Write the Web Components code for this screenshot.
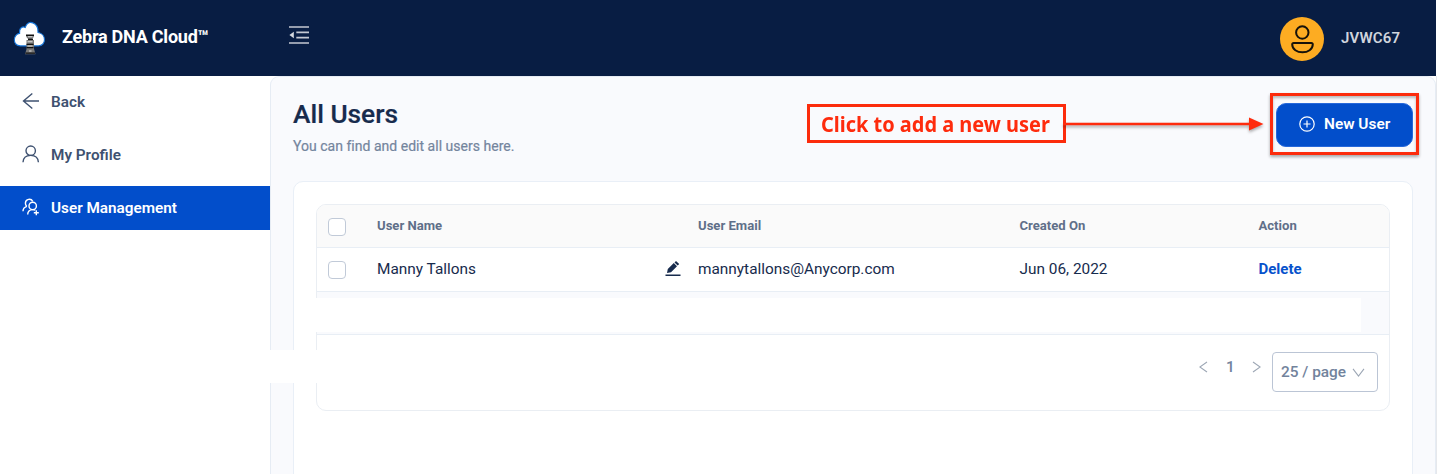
<!DOCTYPE html>
<html lang="en">
<head>
<meta charset="utf-8">
<title>Zebra DNA Cloud</title>
<style>
html,body{margin:0;height:474px;overflow:hidden;background:#fff;font-family:Roboto,"Liberation Sans",sans-serif}
</style>
</head>
<body>
<dna-app></dna-app>
<script>
const define = (name, html) => {
  const t = document.createElement('template');
  t.innerHTML = html;
  customElements.define(name, class extends HTMLElement {
    constructor() {
      super();
      this.attachShadow({mode: 'open'}).append(t.content.cloneNode(true));
    }
  });
};

define('top-bar', `
<style>
:host{display:flex;align-items:center;box-sizing:border-box;width:1436px;height:76px;background:#081d43;color:#fff}
.logo{margin-left:12px;width:36px;height:36px;flex:none}
.brand{margin-left:14px;width:227px;font-size:18px;letter-spacing:-.23px;font-weight:700;line-height:24px;padding-bottom:3px;white-space:nowrap}
.fold{width:20px;height:18px;margin-bottom:7px}
.avatar{margin-left:auto;width:44px;height:44px;margin-top:2px}
.id{width:95px;margin-left:17px;font-size:15px;font-weight:600;line-height:20px;color:#d0d5de;letter-spacing:.15px}
svg{display:block}
</style>
<svg class="logo" viewBox="0 0 36 36">
  <path d="M8 27C-.5 27 .6 16.200 7.200 15.800c-.6-5 3-6.500 5.600-5.300C15.500 2.800 26.200 5.600 25.600 15 34.500 16.200 33.800 27 26 27z" transform="matrix(1 0 0 1.12 .4 -4.3)" fill="#fff" stroke="#1474d8" stroke-width="1.100"/>
  <g transform="matrix(1 0 0 1.1 0 -5.9)"><path d="M14 19h8c0 3-2 3-2 4.500h2v8l1.500 5h-10.500L14.500 32v-8.500h2c0-1.500-2.500-1.500-2.500-4.500z" fill="#777"/>
  <path d="M14 19.200h8M16 23h5M14.500 27.500h7M14.500 30.500h7M13.500 35.500h9.500" stroke="#111" stroke-width="1.300"/>
  <path d="M16 20.600h4.500M15.500 25.200h5M15.500 29h5M17 33.500h2.500" stroke="#ddd" stroke-width="1"/></g>
</svg>
<div class="brand"><slot name="brand"></slot></div>
<svg class="fold" viewBox="0 0 20 18"><path d="M0 1h20M7.300 6.400H20M7.300 11.600H20M0 17h20" stroke="#c3c8d2" stroke-width="1.600"/><path d="M4.800 5.800v6.400L.4 9z" fill="#d5d9e0"/></svg>
<svg class="avatar" viewBox="0 0 44 44"><circle cx="22" cy="22" r="22" fill="#fdac22"/><g fill="none" stroke="#16120a" stroke-width="2"><circle cx="22.300" cy="15.500" r="6.200"/><path d="M13.700 26h17.600q1.500 0 1.500 1.500C32.500 32.500 28 35.300 22.500 35.300S12.400 32.500 12.200 27.500Q12.200 26 13.700 26z"/></g></svg>
<div class="id"><slot></slot></div>`);

define('nav-item', `
<style>
:host{display:flex;align-items:center;box-sizing:border-box;height:44px;margin-bottom:9px;padding:0 0 1px 22px;color:#3e5170;font-size:15.3px;font-weight:600;white-space:nowrap}
:host([active]){background:#024ecb;color:#fff}
.i{width:18px;height:18px;margin-right:11px;margin-bottom:2px}
</style>
<div class="i"><slot name="icon"></slot></div><span><slot></slot></span>`);

define('side-nav', `
<style>
:host{display:block;box-sizing:border-box;width:270px;padding-top:4px;background:#fff;flex:none}
svg{display:block;width:18px;height:18px;fill:none;stroke:currentColor;stroke-width:1.400}
</style>
<nav>
<nav-item><svg slot="icon" viewBox="0 0 18 18"><path d="M10.300 1.500 1.500 9l8.800 7.500M1.500 9H17"/></svg>Back</nav-item>
<nav-item><svg slot="icon" viewBox="0 0 18 18"><circle cx="8.700" cy="5.700" r="4.700"/><path d="M1 17.300c.2-4 2.700-6.900 7.700-6.900s7.500 2.900 7.700 6.900"/></svg>My Profile</nav-item>
<nav-item active><svg slot="icon" viewBox="0 0 18 18"><path d="M10.800 3.300C9 .2 3.800.7 3.400 5c-.1 1.500.5 2.500 1.400 3.400M4.800 8.400C2.200 9.300 1 11 1 13.200"/><circle cx="10.700" cy="7.900" r="3.700"/><path d="M5.700 16.600c0-2.800 1.700-5 5-5 1.200 0 2 .2 2.600.6M14.300 12.200v5M11.800 14.700h5"/></svg>User Management</nav-item>
</nav>`);

define('page-title', `
<style>
:host{display:block;white-space:nowrap}
h1{margin:0;font-size:26.300px;line-height:32px;font-weight:500;color:#172b4d;-webkit-text-stroke:.2px #172b4d}
p{margin:7px 0 0;font-size:14px;line-height:18px;color:#74859d;letter-spacing:.02px;-webkit-text-stroke:.2px #74859d}
</style>
<h1><slot></slot></h1><p><slot name="sub"></slot></p>`);

define('call-out', `
<style>
:host{display:flex;align-items:center;width:458px;color:#fe2b0d}
.box{box-sizing:border-box;width:259px;height:39px;border:3px solid #fc2b0c;padding:1px 0 0 11px;font:700 20.500px/32px "Noto Sans","Open Sans",sans-serif;white-space:nowrap}
.fit{display:inline-block;transform:scaleX(.973);transform-origin:0 50%;letter-spacing:0}
svg{display:block;margin-left:-3px;filter:drop-shadow(0 2px 1.500px #0005)}
</style>
<div class="box"><span class="fit"><slot></slot></span></div>
<svg width="201" height="16" viewBox="0 0 201 16"><path d="M0 8h190" stroke="#fe2b0d" stroke-width="2.300"/><path d="m186 1.500 14.500 6.500-14.500 6.500z" fill="#fe2b0d"/></svg>`);

define('new-user-button', `
<style>
:host{display:block;box-sizing:border-box;width:149px;height:62px;border:3px solid #fc2b0c;padding:7px 3px;box-shadow:0 2px 3px #0005,inset 0 2px 3px #0004}
button{display:flex;align-items:center;width:137px;height:44px;box-sizing:border-box;border:1px solid #2668da;border-radius:10px;background:#024ecb;color:#fff;font:600 15.400px/20px Roboto,sans-serif;padding:0 0 2px 22px;white-space:nowrap}
svg{margin-right:9px;flex:none}
</style>
<button><svg width="16" height="16" fill="none" stroke="#fff" stroke-width="1.200"><circle cx="8" cy="8" r="7.200"/><path d="M8 4.500v7M4.500 8h7"/></svg><slot></slot></button>`);

define('check-box', `<style>:host{display:block;box-sizing:border-box;width:18px;height:18px;border:1px solid #c1cad8;border-radius:4px;background:#fff}</style>`);

define('table-row', `
<style>
:host{display:grid;grid-template-columns:60px 321px 321.500px 239px 1fr;align-items:center;box-sizing:border-box;height:44px;border-bottom:1px solid #e8eef5;font-size:15.380px;color:#172b4d;white-space:nowrap}
:host([head]){height:43px;background:#fafafa;font-size:13.100px;font-weight:700;color:#5f6f89}
check-box{margin-left:11px}
:host([head]) check-box{margin-top:2px}
.name{display:flex;justify-content:space-between;padding-right:17px;align-items:center}
:host(:not([head])) .act{color:#0752cc;font-weight:700;font-size:15px}
span,.name{padding-bottom:2px}
</style>
<check-box></check-box>
<div class="name"><slot name="name"></slot><slot name="edit"></slot></div>
<span><slot name="email"></slot></span><span><slot name="date"></slot></span><span class="act"><slot name="action"></slot></span>`);

define('page-nav', `
<style>
:host{display:flex;justify-content:flex-end;padding:17px 11px 0 0;height:58px;color:#72839c;font-size:15.400px;font-weight:500}
.n{display:flex;align-items:center;height:29px;margin-right:11px}
svg{fill:none;stroke:#9da7b5;stroke-width:1.100}
.one{width:9px;margin:0 17px 0 18px}
.size{display:flex;align-items:center;justify-content:space-between;box-sizing:border-box;width:106px;height:40px;border:1px solid #bbc5d5;border-radius:4px;padding:0 12px 0 8px;white-space:nowrap}
</style>
<div class="n"><svg width="9" height="12"><path d="M8 1 .8 6 8 11"/></svg><span class="one"><slot></slot></span><svg width="9" height="12"><path d="M1 1l7.200 5L1 11"/></svg></div>
<div class="size"><slot name="size"></slot><svg width="13" height="9"><path d="M1 .8 6.500 8 12 .8"/></svg></div>`);

define('user-table', `
<style>
:host{display:block;box-sizing:border-box;width:1074px;height:207px;border:1px solid #eaeef3;border-radius:10px;background:#fff;overflow:hidden}
.empty{height:42px;background:#f9fafd;border-bottom:1px solid #e8eef5}
</style>
<table-row head><span slot="name">User Name</span><span slot="email">User Email</span><span slot="date">Created On</span><span slot="action">Action</span></table-row>
<table-row><span slot="name">Manny Tallons</span><svg slot="edit" width="16" height="16" fill="#172b4d"><path d="M.5 13.400h15v1.600H.5zM2 12l.8-4L8.800 2l3.200 3.200-6 6zM9.500 1.400 11 0l3.200 3-1.500 1.500z"/></svg><span slot="email">mannytallons@Anycorp.com</span><span slot="date">Jun 06, 2022</span><span slot="action">Delete</span></table-row>
<div class="empty"></div>
<page-nav>1<span slot="size">25 / page</span></page-nav>`);

define('dna-app', `
<style>
:host{display:block;position:relative;width:1439px;height:474px;overflow:hidden;background:#fff}
.body{display:flex;width:1436px;height:398px;background:#fff;border-right:1px solid #e6e8ec}
main{box-sizing:border-box;width:1166px;border:1px solid #e6ecf4;border-bottom:0;border-radius:9px 9px 0 0;background:#f9fafd;padding:16px 0 0 22px}
.top{display:flex;height:88px}
page-title{width:514px;padding-top:5px}
call-out{height:39px;margin-top:11px}
new-user-button{margin-left:5px}
.card{box-sizing:border-box;width:1120px;height:310px;border:1px solid #e9eff7;border-radius:10px;background:#fff;padding:22px}
.mask{position:absolute;background:#fff}
.m1{left:316px;top:298px;width:1045px;height:34px}
.m2{left:268px;top:350px;width:52px;height:33px}
</style>
<top-bar><span slot="brand">Zebra DNA Cloud™</span>JVWC67</top-bar>
<div class="body"><side-nav></side-nav>
<main><div class="top"><page-title>All Users<span slot="sub">You can find and edit all users here.</span></page-title><call-out>Click to add a new user</call-out><new-user-button>New User</new-user-button></div>
<div class="card"><user-table></user-table></div></main></div>
<div class="mask m1"></div><div class="mask m2"></div>`);
</script>
</body>
</html>
